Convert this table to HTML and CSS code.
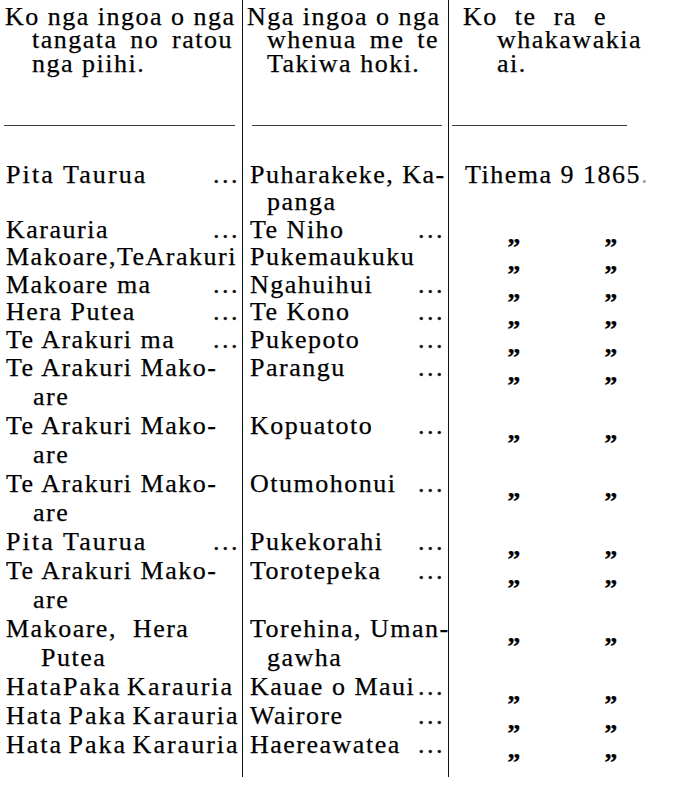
FILE: index.html
```html
<!DOCTYPE html>
<html lang="mi">
<head>
<meta charset="utf-8">
<title>Ko nga ingoa o nga tangata</title>
<link rel="stylesheet" href="styles.css">
</head>
<body>
<div class="sheet">
  <div class="cell c1 head">
    <div class="hl j h1a">Ko nga ingoa o nga</div>
    <div class="hl j hang h1b">tangata no ratou</div>
    <div class="hl hang">nga piihi.</div>
    <div class="rule"></div>
  </div>
  <div class="cell c2 head">
    <div class="hl j h2a">Nga ingoa o nga</div>
    <div class="hl j hang h2b">whenua me te</div>
    <div class="hl hang">Takiwa hoki.</div>
    <div class="rule"></div>
  </div>
  <div class="cell c3 head">
    <div class="hl j h3a">Ko te ra e</div>
    <div class="hl hang">whakawakia</div>
    <div class="hl hang">ai.</div>
    <div class="rule"></div>
  </div>

  <div class="cell c1 t"><div class="ln lead"><span class="wide">Pita Taurua</span><span class="dots">...</span></div></div>
  <div class="cell c2 t"><div class="ln">Puharakeke, Ka-</div><div class="ln hang">panga</div></div>
  <div class="cell c3 t"><div class="ln date">Tihema 9 1865<span class="faint">.</span></div></div>

  <div class="cell c1 t"><div class="ln lead"><span>Karauria</span><span class="dots">...</span></div></div>
  <div class="cell c2 t"><div class="ln lead"><span>Te Niho</span><span class="dots">...</span></div></div>
  <div class="cell c3 t"><div class="ln ditto"><span class="dq">„</span><span class="dq">„</span></div></div>

  <div class="cell c1 t"><div class="ln">Makoare,TeArakuri</div></div>
  <div class="cell c2 t"><div class="ln">Pukemaukuku</div></div>
  <div class="cell c3 t"><div class="ln ditto"><span class="dq">„</span><span class="dq">„</span></div></div>

  <div class="cell c1 t"><div class="ln lead"><span>Makoare ma</span><span class="dots">...</span></div></div>
  <div class="cell c2 t"><div class="ln lead"><span>Ngahuihui</span><span class="dots">...</span></div></div>
  <div class="cell c3 t"><div class="ln ditto"><span class="dq">„</span><span class="dq">„</span></div></div>

  <div class="cell c1 t"><div class="ln lead"><span>Hera Putea</span><span class="dots">...</span></div></div>
  <div class="cell c2 t"><div class="ln lead"><span>Te Kono</span><span class="dots">...</span></div></div>
  <div class="cell c3 t"><div class="ln ditto"><span class="dq">„</span><span class="dq">„</span></div></div>

  <div class="cell c1 t"><div class="ln lead"><span>Te Arakuri ma</span><span class="dots">...</span></div></div>
  <div class="cell c2 t"><div class="ln lead"><span>Pukepoto</span><span class="dots">...</span></div></div>
  <div class="cell c3 t"><div class="ln ditto"><span class="dq">„</span><span class="dq">„</span></div></div>

  <div class="cell c1"><div class="ln">Te Arakuri Mako-</div><div class="ln hang">are</div></div>
  <div class="cell c2"><div class="ln lead"><span>Parangu</span><span class="dots">...</span></div></div>
  <div class="cell c3"><div class="ln ditto"><span class="dq">„</span><span class="dq">„</span></div></div>

  <div class="cell c1"><div class="ln">Te Arakuri Mako-</div><div class="ln hang">are</div></div>
  <div class="cell c2"><div class="ln lead"><span>Kopuatoto</span><span class="dots">...</span></div></div>
  <div class="cell c3"><div class="ln ditto"><span class="dq">„</span><span class="dq">„</span></div></div>

  <div class="cell c1"><div class="ln">Te Arakuri Mako-</div><div class="ln hang">are</div></div>
  <div class="cell c2"><div class="ln lead"><span>Otumohonui</span><span class="dots">...</span></div></div>
  <div class="cell c3"><div class="ln ditto"><span class="dq">„</span><span class="dq">„</span></div></div>

  <div class="cell c1"><div class="ln lead"><span class="wide">Pita Taurua</span><span class="dots">...</span></div></div>
  <div class="cell c2"><div class="ln lead"><span>Pukekorahi</span><span class="dots">...</span></div></div>
  <div class="cell c3"><div class="ln ditto"><span class="dq">„</span><span class="dq">„</span></div></div>

  <div class="cell c1"><div class="ln">Te Arakuri Mako-</div><div class="ln hang">are</div></div>
  <div class="cell c2"><div class="ln lead"><span>Torotepeka</span><span class="dots">...</span></div></div>
  <div class="cell c3"><div class="ln ditto"><span class="dq">„</span><span class="dq">„</span></div></div>

  <div class="cell c1"><div class="ln">Makoare,&nbsp; Hera</div><div class="ln hang">&nbsp;Putea</div></div>
  <div class="cell c2"><div class="ln">Torehina, Uman-</div><div class="ln hang">gawha</div></div>
  <div class="cell c3"><div class="ln ditto"><span class="dq">„</span><span class="dq">„</span></div></div>

  <div class="cell c1"><div class="ln tightword">HataPaka Karauria</div></div>
  <div class="cell c2"><div class="ln lead"><span>Kauae o Maui</span><span class="dots">...</span></div></div>
  <div class="cell c3"><div class="ln ditto"><span class="dq">„</span><span class="dq">„</span></div></div>

  <div class="cell c1"><div class="ln tightword">Hata Paka Karauria</div></div>
  <div class="cell c2"><div class="ln lead"><span>Wairore</span><span class="dots">...</span></div></div>
  <div class="cell c3"><div class="ln ditto"><span class="dq">„</span><span class="dq">„</span></div></div>

  <div class="cell c1"><div class="ln tightword">Hata Paka Karauria</div></div>
  <div class="cell c2"><div class="ln lead"><span>Haereawatea</span><span class="dots">...</span></div></div>
  <div class="cell c3"><div class="ln ditto"><span class="dq">„</span><span class="dq">„</span></div></div>

  <div class="cell c1 end"></div>
  <div class="cell c2 end"></div>
  <div class="cell c3 end"></div>
</div>
</body>
</html>
```

FILE: styles.css
```css
* {
  box-sizing: border-box;
  margin: 0;
  padding: 0;
}

html, body {
  background: #ffffff;
}

body {
  margin: 0;
  font-family: "Liberation Serif", "Times New Roman", serif;
  font-size: 26px;
  color: #000000;
  letter-spacing: 1.5px;
  -webkit-text-stroke: 0.25px #000000;
}

.sheet {
  display: grid;
  grid-template-columns: 243px 206px 1fr;
  width: 674px;
}

.cell {
  white-space: nowrap;
  line-height: 29px;
}

.c1,
.c2 {
  border-right: 1px solid #111111;
}

.t {
  line-height: 27.5px;
}

/* header */
.head {
  line-height: 23.5px;
  padding-top: 4.5px;
  padding-bottom: 34.5px;
}

.hl.j {
  text-align: justify;
  text-align-last: justify;
}

.c1 .hl { padding-left: 5px; }
.c1 .hl.hang { padding-left: 32px; }
.c1 .h1a { padding-right: 7px; }
.c1 .h1b { padding-right: 9px; }

.c2 .hl { padding-left: 4px; }
.c2 .hl.hang { padding-left: 24px; }
.c2 .h2a { padding-right: 8px; }
.c2 .h2b { padding-right: 9px; }

.c3 .hl { padding-left: 14px; }
.c3 .hl.hang { padding-left: 48px; }
.c3 .h3a { padding-right: 67px; }

.rule {
  height: 1px;
  background: #3a3a3a;
  margin-top: 50px;
}

.c1 .rule { margin-left: 4px; margin-right: 7px; }
.c2 .rule { margin-left: 9px; margin-right: 6px; }
.c3 .rule { margin-left: 3px; width: 175px; }

/* body lines */
.ln.lead {
  display: flex;
  justify-content: space-between;
}

.dots {
  letter-spacing: 2.5px;
}

.wide {
  letter-spacing: 2.1px;
}

.c1 .ln { padding-left: 6px; padding-right: 2px; }
.c1 .ln.hang { padding-left: 33px; }

.c2 .ln { padding-left: 7px; padding-right: 3px; }
.c2 .ln.hang { padding-left: 24px; }

.tightword {
  letter-spacing: 2px;
  word-spacing: -3px;
}

.c3 .date { padding-left: 16px; }

.faint {
  color: #9a9a9a;
  -webkit-text-stroke: 0;
}

.ditto {
  padding-left: 45px;
}

.dq {
  display: inline-block;
  width: 40px;
  text-align: center;
  line-height: 10px;
  vertical-align: -5px;
  letter-spacing: 0;
  font-weight: bold;
}

.dq + .dq {
  margin-left: 57px;
}

.end {
  height: 18px;
}
```
